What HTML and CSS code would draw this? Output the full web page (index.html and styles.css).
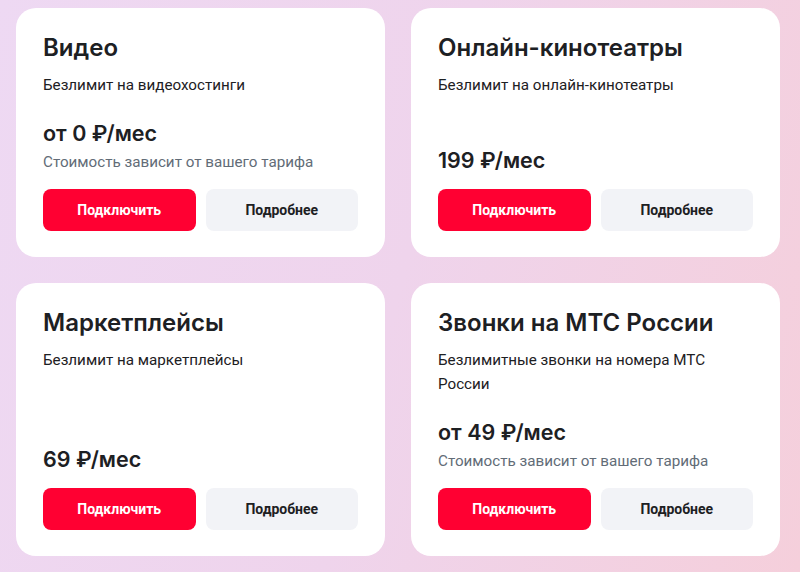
FILE: index.html
```html
<!DOCTYPE html>
<html lang="ru">
<head>
<meta charset="utf-8">
<link rel="stylesheet" href="styles.css">
</head>
<body>
<main class="grid">
  <section class="card">
    <h2 class="title">Видео</h2>
    <p class="desc">Безлимит на видеохостинги</p>
    <div class="price-block">
      <div class="price">от 0 ₽/мес</div>
      <div class="note">Стоимость зависит от вашего тарифа</div>
    </div>
    <div class="actions">
      <button class="btn btn-primary">Подключить</button>
      <button class="btn btn-secondary">Подробнее</button>
    </div>
  </section>
  <section class="card">
    <h2 class="title">Онлайн-кинотеатры</h2>
    <p class="desc">Безлимит на онлайн-кинотеатры</p>
    <div class="price-block">
      <div class="price">199 ₽/мес</div>
    </div>
    <div class="actions">
      <button class="btn btn-primary">Подключить</button>
      <button class="btn btn-secondary">Подробнее</button>
    </div>
  </section>
  <section class="card">
    <h2 class="title">Маркетплейсы</h2>
    <p class="desc">Безлимит на маркетплейсы</p>
    <div class="price-block">
      <div class="price">69 ₽/мес</div>
    </div>
    <div class="actions">
      <button class="btn btn-primary">Подключить</button>
      <button class="btn btn-secondary">Подробнее</button>
    </div>
  </section>
  <section class="card">
    <h2 class="title">Звонки на МТС России</h2>
    <p class="desc">Безлимитные звонки на номера МТС России</p>
    <div class="price-block">
      <div class="price">от 49 ₽/мес</div>
      <div class="note">Стоимость зависит от вашего тарифа</div>
    </div>
    <div class="actions">
      <button class="btn btn-primary">Подключить</button>
      <button class="btn btn-secondary">Подробнее</button>
    </div>
  </section>
</main>
</body>
</html>
```

FILE: styles.css
```css
* { box-sizing: border-box; }
html, body { margin: 0; padding: 0; }
body {
  width: 800px;
  height: 572px;
  overflow: hidden;
  background: linear-gradient(105deg, #eed9f3 0%, #efd4ec 50%, #f5cfdb 100%);
  font-family: "Inter", "Roboto", sans-serif;
  color: #1d2023;
}
.grid {
  display: grid;
  grid-template-columns: 369px 369px;
  column-gap: 26px;
  row-gap: 26px;
  padding: 8px 20px 16px 16px;
}
.card {
  background: #fff;
  border-radius: 20px;
  padding: 25px 27px 26px 27px;
  display: flex;
  flex-direction: column;
}
.title {
  margin: 0;
  font-size: 24px;
  line-height: 30px;
  font-weight: 600;
  letter-spacing: 0;
}
.desc {
  margin: 10px 0 0;
  font-family: "Roboto", sans-serif;
  font-size: 15.2px;
  line-height: 24px;
  font-weight: 400;
  max-width: 280px;
}
.price-block {
  margin-top: auto;
  padding-top: 22px;
  padding-bottom: 15px;
}
.price {
  font-size: 21.5px;
  line-height: 28px;
  font-weight: 600;
}
.note {
  margin-top: 3px;
  font-family: "Roboto", sans-serif;
  font-size: 15.2px;
  line-height: 24px;
  color: #626c77;
}
.actions {
  display: grid;
  grid-template-columns: 1fr 1fr;
  gap: 10px;
}
.btn {
  height: 42px;
  border: none;
  border-radius: 8px;
  font-family: "Roboto", sans-serif;
  font-size: 14px;
  font-weight: 700;
  cursor: pointer;
}
.btn-primary {
  background: #ff0032;
  color: #fff;
}
.btn-secondary {
  background: #f2f3f7;
  color: #1d2023;
}
```
